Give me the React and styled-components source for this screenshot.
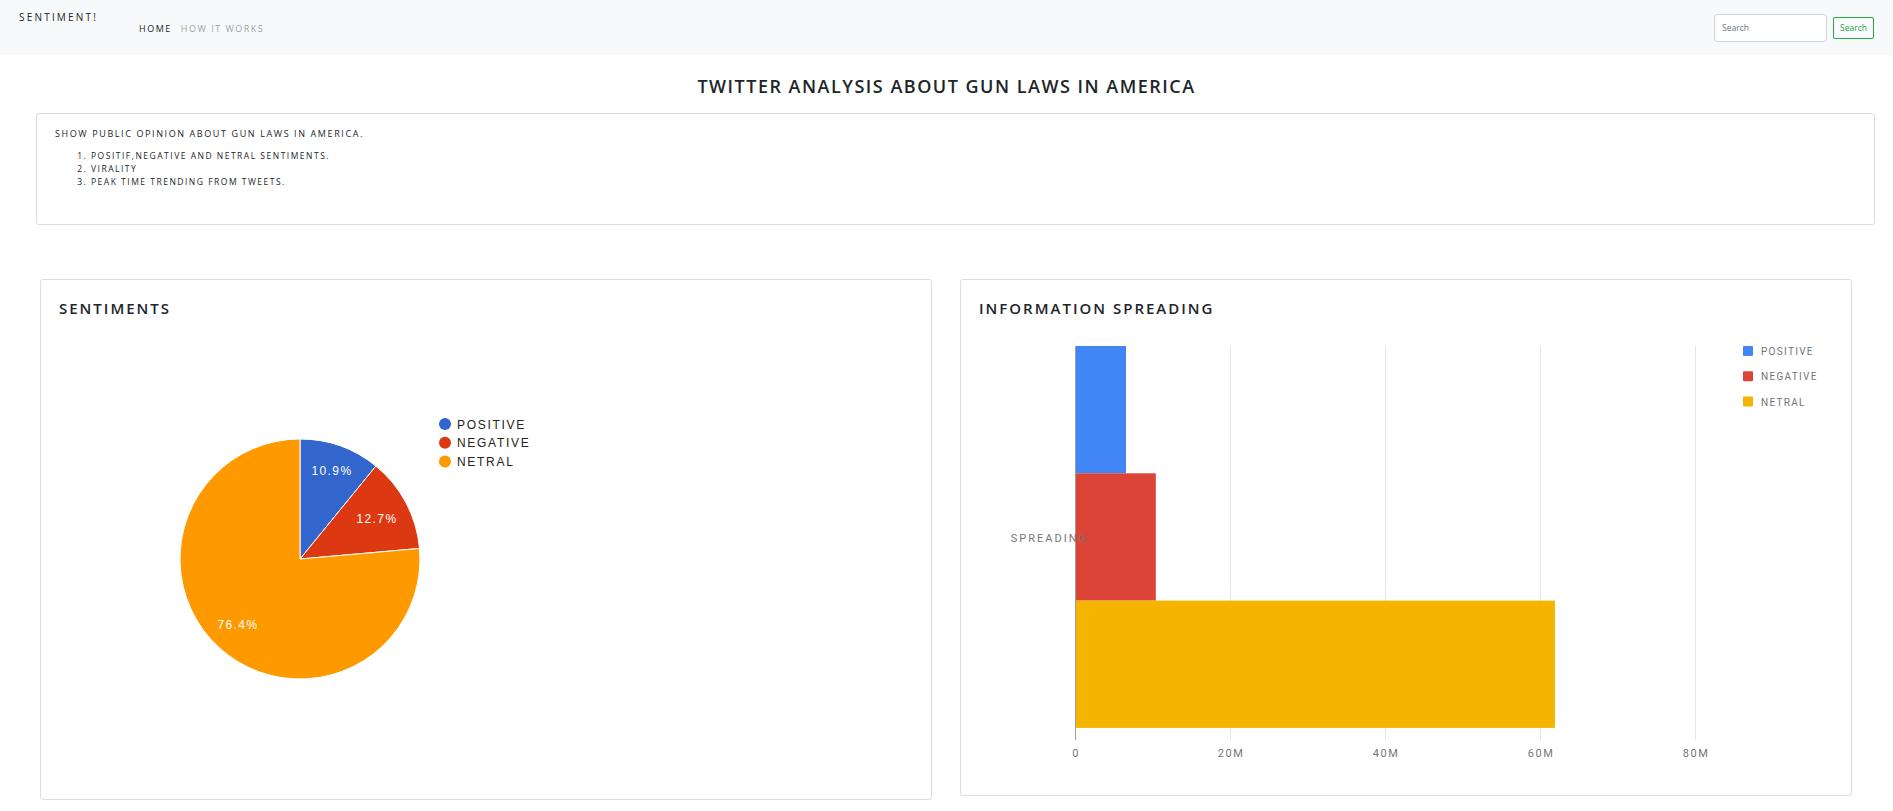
import React from 'react';
import styled, { createGlobalStyle } from 'styled-components';

const GlobalStyle = createGlobalStyle`
  body {
    margin: 0;
    background: #fff;
    font-family: "Open Sans", "Liberation Sans", sans-serif;
    color: #212529;
  }
`;

const sentiments = [
  { label: 'POSITIVE', value: 10.9, color: '#3366cc', at: [291, 153] },
  { label: 'NEGATIVE', value: 12.7, color: '#dc3912', at: [336, 201] },
  { label: 'NETRAL', value: 76.4, color: '#ff9900', at: [197, 307] },
];

const spreading = [
  { label: 'POSITIVE', value: 6.45, color: '#4285f4' },
  { label: 'NEGATIVE', value: 10.3, color: '#db4437' },
  { label: 'NETRAL', value: 61.8, color: '#f4b400' },
];

function PieChart() {
  const cx = 259, cy = 241, r = 120;
  const point = (deg) => {
    const a = (deg * Math.PI) / 180;
    return `${(cx + r * Math.sin(a)).toFixed(2)},${(cy - r * Math.cos(a)).toFixed(2)}`;
  };
  let start = 0;
  return (
    <ChartSvg width="890" height="483">
      {sentiments.map((s) => {
        const end = start + (s.value / 100) * 360;
        const d = `M${cx},${cy} L${point(start)} A${r},${r} 0 ${end - start > 180 ? 1 : 0} 1 ${point(end)} Z`;
        start = end;
        return <path key={s.label} d={d} fill={s.color} stroke="#fff" strokeWidth="1" />;
      })}
      {sentiments.map((s) => (
        <PieLabel key={s.label} x={s.at[0]} y={s.at[1] + 4} textAnchor="middle">
          {s.value}%
        </PieLabel>
      ))}
      {sentiments.map((s, i) => (
        <g key={s.label}>
          <circle cx="404" cy={106 + i * 18.7} r="6" fill={s.color} />
          <PieLegend x="416" y={110.5 + i * 18.7}>{s.label}</PieLegend>
        </g>
      ))}
    </ChartSvg>
  );
}

function BarChart() {
  const x0 = 115, top = 28, step = 155, barH = 127.3;
  const ticks = ['0', '20M', '40M', '60M', '80M'];
  return (
    <ChartSvg width="890" height="479">
      {ticks.map((t, i) =>
        i > 0 ? (
          <line key={t} x1={x0 - 0.5 + i * step} x2={x0 - 0.5 + i * step} y1={top} y2="422" stroke="#e6e6e6" />
        ) : null
      )}
      {spreading.map((b, i) => (
        <rect
          key={b.label}
          x={x0}
          y={top + i * barH}
          width={(b.value / 20) * step}
          height={barH}
          fill={b.color}
        />
      ))}
      <line x1={x0 - 0.5} x2={x0 - 0.5} y1={top} y2="422" stroke="#9e9e9e" />
      {ticks.map((t, i) => (
        <AxisText key={t} x={x0 + i * step} y="439" textAnchor="middle">{t}</AxisText>
      ))}
      <AxisText x="127" y="224" textAnchor="end" $spacing={2}>SPREADING</AxisText>
      {spreading.map((b, i) => (
        <g key={b.label}>
          <rect x="782" y={28 + i * 25.3} width="10" height="10" rx="1" fill={b.color} />
          <BarLegend x="800" y={37 + i * 25.3}>{b.label}</BarLegend>
        </g>
      ))}
    </ChartSvg>
  );
}

export default function App() {
  return (
    <>
      <GlobalStyle />
      <Nav>
        <Brand href="#">SENTIMENT!</Brand>
        <NavLinks>
          <li><NavLink href="#" $active>HOME</NavLink></li>
          <li><NavLink href="#">HOW IT WORKS</NavLink></li>
        </NavLinks>
        <SearchForm onSubmit={(e) => e.preventDefault()}>
          <SearchInput type="search" placeholder="Search" />
          <SearchButton type="submit">Search</SearchButton>
        </SearchForm>
      </Nav>

      <PageTitle>TWITTER ANALYSIS ABOUT GUN LAWS IN AMERICA</PageTitle>

      <Intro>
        <p>SHOW PUBLIC OPINION ABOUT GUN LAWS IN AMERICA.</p>
        <ol>
          <li>POSITIF,NEGATIVE AND NETRAL SENTIMENTS.</li>
          <li>VIRALITY</li>
          <li>PEAK TIME TRENDING FROM TWEETS.</li>
        </ol>
      </Intro>

      <CardsRow>
        <Card $height={521}>
          <CardTitle>SENTIMENTS</CardTitle>
          <PieChart />
        </Card>
        <Card $height={517}>
          <CardTitle>INFORMATION SPREADING</CardTitle>
          <BarChart />
        </Card>
      </CardsRow>
    </>
  );
}

const Nav = styled.nav`
  display: flex;
  align-items: flex-start;
  height: 55px;
  padding: 0 19px;
  box-sizing: border-box;
  background: #f8f9fa;
`;

const Brand = styled.a`
  margin-top: 10px;
  font-size: 10px;
  line-height: 14px;
  letter-spacing: 2.2px;
  color: #212529;
  text-decoration: none;
`;

const NavLinks = styled.ul`
  display: flex;
  gap: 9px;
  list-style: none;
  margin: 22px 0 0 41px;
  padding: 0;
  font-size: 9px;
  line-height: 13px;
`;

const NavLink = styled.a`
  font-size: 9px;
  line-height: 13px;
  letter-spacing: 1.5px;
  text-decoration: none;
  font-weight: ${(p) => (p.$active ? 500 : 400)};
  color: ${(p) => (p.$active ? '#212529' : 'rgba(0, 0, 0, 0.4)')};
`;

const SearchForm = styled.form`
  display: flex;
  align-items: center;
  gap: 6px;
  margin-left: auto;
  align-self: center;
`;

const SearchInput = styled.input`
  width: 113px;
  height: 28px;
  box-sizing: border-box;
  padding: 0 7px;
  border: 1px solid #ced4da;
  border-radius: 3px;
  font-family: inherit;
  font-size: 8.5px;
  outline: none;
  &::placeholder {
    color: #6c757d;
  }
`;

const SearchButton = styled.button`
  width: 41px;
  height: 22px;
  padding: 0;
  border: 1px solid #28a745;
  border-radius: 2px;
  background: transparent;
  color: #28a745;
  font-family: inherit;
  font-size: 8.5px;
`;

const PageTitle = styled.h1`
  margin: 0 0 16px;
  padding-top: 20px;
  text-align: center;
  font-size: 18px;
  line-height: 22px;
  font-weight: 600;
  letter-spacing: 1.5px;
`;

const Intro = styled.div`
  margin: 0 18px 0 36px;
  padding: 13px 18px 36px;
  border: 1px solid #ddd;
  border-radius: 3px;
  font-size: 9px;
  line-height: 13px;
  letter-spacing: 1.6px;
  p {
    margin: 0 0 9px;
  }
  ol {
    margin: 0;
    padding-left: 36px;
    font-size: 8.5px;
    letter-spacing: 1.5px;
  }
`;

const CardsRow = styled.div`
  display: grid;
  grid-template-columns: 1fr 1fr;
  gap: 28px;
  align-items: start;
  margin: 54px 41px 0 40px;
`;

const Card = styled.section`
  height: ${(p) => p.$height}px;
  box-sizing: border-box;
  border: 1px solid #ddd;
  border-radius: 3px;
  overflow: hidden;
`;

const CardTitle = styled.h2`
  margin: 0;
  padding: 18px 18px 0;
  font-size: 15px;
  line-height: 20px;
  font-weight: 600;
  letter-spacing: 2px;
`;

const ChartSvg = styled.svg`
  display: block;
`;

const PieLabel = styled.text`
  font-family: "Liberation Sans", Arial, sans-serif;
  font-size: 12px;
  letter-spacing: 1.4px;
  fill: #fff;
`;

const PieLegend = styled.text`
  font-family: "Liberation Sans", Arial, sans-serif;
  font-size: 12px;
  letter-spacing: 1.7px;
  fill: #222;
`;

const AxisText = styled.text`
  font-family: Roboto, "Liberation Sans", sans-serif;
  font-size: 11px;
  letter-spacing: ${(p) => p.$spacing ?? 1.5}px;
  fill: #757575;
`;

const BarLegend = styled.text`
  font-family: Roboto, "Liberation Sans", sans-serif;
  font-size: 10px;
  letter-spacing: 1.3px;
  fill: #757575;
`;
